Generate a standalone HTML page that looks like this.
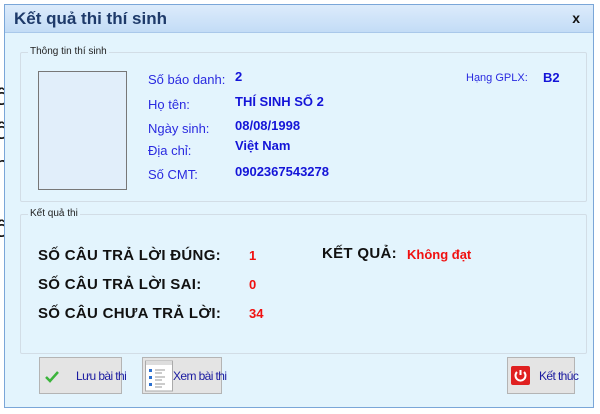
<!DOCTYPE html>
<html><head><meta charset="utf-8"><style>
*{margin:0;padding:0;box-sizing:border-box}
body{width:600px;height:414px;background:#fff;position:relative;overflow:hidden;font-family:"Liberation Sans",Arial,sans-serif}
.bg{position:absolute;left:-5px;font-size:24px;color:#111;white-space:nowrap;line-height:1}
.win{position:absolute;left:4px;top:4px;width:590px;height:404px;border:1px solid #7aa6d8;background:#e3f4fd}
.title{height:28px;background:linear-gradient(#dcebfb,#c3dcf6);border-bottom:1px solid #a9c8ea;position:relative}
.title span{position:absolute;left:9px;top:4px;font-size:17px;font-weight:bold;color:#1e3a6a}
.title b{position:absolute;right:13px;top:5px;font-size:14px;color:#111}
.grp{position:absolute;border:1px solid #d2dde6;border-radius:2px}
.grp .lg{position:absolute;left:7px;top:-7px;background:#e3f4fd;padding:0 2px;font-size:10px;color:#222;white-space:nowrap}
.t{position:absolute;white-space:nowrap}
.lb{color:#2a2ae0;font-size:13px}
.vl{color:#1414d8;font-size:13px;font-weight:bold}
.k{font-size:15px;color:#111;font-weight:bold;letter-spacing:0.3px}
.r{color:#f01010;font-size:13px;font-weight:bold}
.btn{position:absolute;top:357px;height:37px;border:1px solid #b4b4b4;background:#e4e4e4;font-size:12px;color:#1a1aa0;white-space:nowrap}
.btn span{white-space:nowrap;letter-spacing:-0.6px}
</style></head><body>
<div class="bg" style="top:86px">ố</div>
<div class="bg" style="top:120px">ố</div>
<div class="bg" style="top:154px">n</div>
<div class="bg" style="top:218px">ố</div>
<div class="win">
<div class="title"><span>Kết quả thi thí sinh</span><b>x</b></div>
<div class="grp" style="left:15px;top:47px;width:567px;height:150px"><div class="lg">Thông tin thí sinh</div></div>
<div class="grp" style="left:15px;top:209px;width:567px;height:140px"><div class="lg">Kết quả thi</div></div>
<div style="position:absolute;left:33px;top:66px;width:89px;height:119px;border:1px solid #777;background:#e1eefa"></div>
<div class="t lb" style="left:143px;top:67px">Số báo danh:</div><div class="t vl" style="left:230px;top:64px">2</div>
<div class="t lb" style="left:143px;top:92px">Họ tên:</div><div class="t vl" style="left:230px;top:89px">THÍ SINH SỐ 2</div>
<div class="t lb" style="left:143px;top:116px">Ngày sinh:</div><div class="t vl" style="left:230px;top:113px">08/08/1998</div>
<div class="t lb" style="left:143px;top:138px">Địa chỉ:</div><div class="t vl" style="left:230px;top:133px">Việt Nam</div>
<div class="t lb" style="left:143px;top:162px">Số CMT:</div><div class="t vl" style="left:230px;top:159px">0902367543278</div>
<div class="t lb" style="left:461px;top:67px;font-size:11px">Hạng GPLX:</div><div class="t vl" style="left:538px;top:65px">B2</div>
<div class="t k" style="left:33px;top:242px">SỐ CÂU TRẢ LỜI ĐÚNG:</div><div class="t r" style="left:244px;top:243px">1</div>
<div class="t k" style="left:33px;top:271px">SỐ CÂU TRẢ LỜI SAI:</div><div class="t r" style="left:244px;top:272px">0</div>
<div class="t k" style="left:33px;top:300px">SỐ CÂU CHƯA TRẢ LỜI:</div><div class="t r" style="left:244px;top:301px">34</div>
<div class="t k" style="left:317px;top:240px">KẾT QUẢ:</div><div class="t r" style="left:402px;top:242px">Không đạt</div>
</div>
<div class="btn" style="left:39px;width:83px">
<svg style="position:absolute;left:4px;top:12px" width="16" height="14" viewBox="0 0 16 14"><path d="M2 7l4 4 8-9" fill="none" stroke="#3cb43c" stroke-width="2.5"/></svg>
<span style="position:absolute;left:36px;top:11px">Lưu bài thi</span></div>
<div class="btn" style="left:142px;width:80px">
<svg style="position:absolute;left:2px;top:2px" width="28" height="32" viewBox="0 0 28 32"><rect x="0.5" y="1" width="27" height="30" fill="#fff" stroke="#aaa"/><rect x="1" y="1" width="26" height="4" fill="#ddd"/><rect x="4" y="9" width="3" height="3" fill="#2a6fd0"/><rect x="4" y="16" width="3" height="3" fill="#2a6fd0"/><rect x="4" y="23" width="3" height="3" fill="#2a6fd0"/><path d="M10 10h10M10 13h7M10 17h10M10 20h7M10 24h10M10 27h7" stroke="#999" stroke-width="1"/></svg>
<span style="position:absolute;left:30px;top:11px">Xem bài thi</span></div>
<div class="btn" style="left:507px;width:68px">
<svg style="position:absolute;left:3px;top:8px" width="19" height="19" viewBox="0 0 19 19"><rect width="19" height="19" rx="2" fill="#e02020"/><path d="M6 6a5 5 0 1 0 7 0" fill="none" stroke="#fff" stroke-width="2"/><path d="M9.5 4v5" stroke="#fff" stroke-width="2"/></svg>
<span style="position:absolute;left:31px;top:11px">Kết thúc</span></div>
</body></html>
